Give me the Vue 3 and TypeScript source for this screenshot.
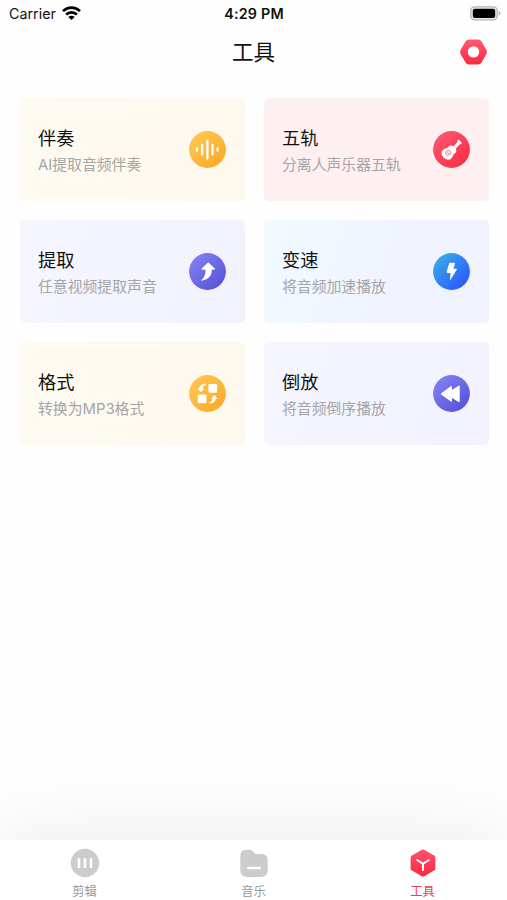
<script setup lang="ts">
type IconName = 'wave' | 'guitar' | 'extract' | 'bolt' | 'convert' | 'rewind'

interface Tool {
  title: string
  desc: string
  icon: IconName
  tone: string
  from: string
  to: string
}

const tools: Tool[] = [
  { title: '伴奏', desc: 'AI提取音频伴奏', icon: 'wave', tone: 'cream', from: '#ffc653', to: '#fbab28' },
  { title: '五轨', desc: '分离人声乐器五轨', icon: 'guitar', tone: 'rose', from: '#ff5670', to: '#fb2e46' },
  { title: '提取', desc: '任意视频提取声音', icon: 'extract', tone: 'lilac', from: '#8280f4', to: '#5755d6' },
  { title: '变速', desc: '将音频加速播放', icon: 'bolt', tone: 'sky', from: '#39ace9', to: '#2b58fc' },
  { title: '格式', desc: '转换为MP3格式', icon: 'convert', tone: 'cream', from: '#ffc653', to: '#fbab28' },
  { title: '倒放', desc: '将音频倒序播放', icon: 'rewind', tone: 'lilac', from: '#8280f4', to: '#5755d6' },
]
</script>

<template>
  <div class="screen">
    <header class="status">
      <div class="carrier">
        <span>Carrier</span>
        <svg class="wifi" width="19" height="14" viewBox="0 0 19 14" fill="none" stroke="#000" stroke-width="2.700">
          <path d="M1 5.1C5.8.5 13.2.5 18 5.1" />
          <path d="M4.1 8.500C7.200 5.600 11.800 5.600 14.900 8.500" />
          <path d="M9.500 14 6.300 10.900C8.200 9.300 10.800 9.300 12.700 10.900Z" fill="#000" stroke="none" />
        </svg>
      </div>
      <div class="time">4:29 PM</div>
      <div class="power">
        <svg width="31" height="15" viewBox="0 0 31 15">
          <rect x=".8" y=".8" width="26.400" height="13" rx="3.800" fill="#eee" stroke="#b4b4b4" stroke-width="1.300" />
          <rect x="2.800" y="2.700" width="22.400" height="9.200" rx="2" fill="#000" />
          <path d="M28.800 5v4.600c2-.7 2-3.900 0-4.600Z" fill="#aaa" />
        </svg>
      </div>
    </header>

    <nav class="navbar">
      <h1>工具</h1>
      <svg class="settings" width="27" height="26" viewBox="0 0 27 26">
        <defs>
          <linearGradient id="nut" x1="0" y1="0" x2="0" y2="1">
            <stop offset="0" stop-color="#ff5873" />
            <stop offset="1" stop-color="#fb2a40" />
          </linearGradient>
        </defs>
        <path d="M9 .5h9q2.200 0 3.500 1.900l4.700 8.200q1.300 2.400 0 4.800l-4.700 8.200q-1.300 1.900-3.500 1.900H9q-2.200 0-3.500-1.900L.8 15.400q-1.300-2.400 0-4.800l4.700-8.200Q6.800.5 9 .5Z" fill="url(#nut)" />
        <circle cx="13.500" cy="12.900" r="5.700" fill="#fff" />
      </svg>
    </nav>

    <main class="grid">
      <article v-for="tool in tools" :key="tool.title" class="card" :class="tool.tone">
        <div class="copy">
          <h2>{{ tool.title }}</h2>
          <p>{{ tool.desc }}</p>
        </div>
        <svg class="badge" width="37" height="37" viewBox="0 0 37 37">
          <defs>
            <linearGradient :id="`fill-${tool.icon}`" x1=".1" y1=".1" x2=".85" y2=".9">
              <stop offset="0" :stop-color="tool.from" />
              <stop offset="1" :stop-color="tool.to" />
            </linearGradient>
          </defs>
          <circle cx="18.500" cy="18.500" r="18.400" :fill="`url(#fill-${tool.icon})`" />
          <g v-if="tool.icon === 'wave'" stroke="#fff" stroke-width="2.300" stroke-linecap="round">
            <path d="M8 17.500v2.200M13.100 13.900v9.600M18.400 9.900v17.600M23.500 13.900v9.600M28.600 17.500v2.200" />
          </g>
          <g v-else-if="tool.icon === 'guitar'">
            <path d="M26.300 9.100 28.500 11.500Q29.100 12.300 28.300 12.900L26.500 13.600 22.700 17.700C24.100 20 23 21.500 21.600 22.600 20.300 23.600 20.200 24.400 19.200 26.200 17.200 29.800 13.200 29.300 10.300 26.200 7.600 23.100 7.900 19.900 11.300 18 13.100 17 14.200 17.200 15.300 15.900 16.700 14.300 18.600 13.800 20.400 15.400L24.200 11.600 24.500 9.600Q25.300 8.400 26.300 9.100Z" fill="#fff" />
            <ellipse cx="15.200" cy="21.800" rx="2.600" ry="2.200" transform="rotate(-40 15.200 21.800)" fill="none" stroke="#fb6678" stroke-width=".9" />
            <path d="m14.100 21.200 2 2" stroke="#fb6678" stroke-width=".8" />
          </g>
          <path v-else-if="tool.icon === 'extract'" d="M18.500 10Q19.300 9.200 20.100 10L26 15.700Q26.500 16.400 25.700 16.500L22.700 16.700C23 22 20.200 26.300 12.600 27.700Q12 27.700 12.500 27.100C15.800 24.300 16.700 20.500 16.500 16.800L12.900 16.600Q12.100 16.300 12.700 15.600Z" fill="#fff" />
          <path v-else-if="tool.icon === 'bolt'" d="M17.200 9.700H21.200Q22.300 9.700 21.900 10.700L20.400 15.700H23.200Q24.200 15.800 23.700 16.700L17.700 26.600Q16.900 27.600 17 26.400L17.500 19.900H14.300Q13.400 19.700 13.600 18.800L16 10.600Q16.300 9.700 17.200 9.700Z" fill="#fff" />
          <g v-else-if="tool.icon === 'convert'" fill="#fff">
            <rect x="19.400" y="9" width="8.800" height="8.700" rx="1.300" />
            <rect x="8.700" y="19.500" width="8.800" height="8.700" rx="1.300" />
            <g stroke="#fff" stroke-width=".7" stroke-linejoin="round">
              <path d="M17 9.200C12.600 9.300 10.800 10.600 10.700 13.600L9.300 13.600 11.800 16.900 14.700 13.600 13.100 13.600C13.200 11.700 14.400 10.200 17 9.200Z" />
              <path d="M20 28C24.500 27.800 26.400 26.500 26.500 23.500L27.900 23.500 25.400 20.200 22.500 23.500 24.100 23.500C24 25.400 22.700 27 20 28Z" />
            </g>
          </g>
          <path v-else d="M17.800 11.200Q18.900 10.500 18.900 11.700V15L25.600 10.700Q26.700 10.100 26.700 11.300V26.300Q26.700 27.500 25.600 26.900L18.900 22.700V25.900Q18.900 27.100 17.800 26.400L8.500 19.700Q7.400 18.800 8.500 17.900Z" fill="#fff" />
        </svg>
      </article>
    </main>

    <footer class="tabs">
      <div class="tab">
        <svg width="30" height="30" viewBox="0 0 30 30">
          <circle cx="15" cy="15" r="14.200" fill="#ccc" />
          <path d="M9 10.300v9.800M15 10.300v9.800M21 10.300v9.800" stroke="#fff" stroke-width="2.600" />
        </svg>
        <span>剪辑</span>
      </div>
      <div class="tab">
        <svg width="30" height="30" viewBox="0 0 30 30">
          <path d="M7.500 1.700H10.500C15 1.700 14.300 6 18 6H22C26.500 6 28.700 8.300 28.700 12V22Q28.700 29 21.700 29H8.300Q1.300 29 1.300 22V8Q1.300 1.700 7.500 1.700Z" fill="#ccc" />
          <path d="M9.300 20h11.400" stroke="#fff" stroke-width="2.600" stroke-linecap="round" />
        </svg>
        <span>音乐</span>
      </div>
      <div class="tab active">
        <svg width="30" height="30" viewBox="0 0 30 30">
          <defs>
            <linearGradient id="cube" x1="0" y1="0" x2="0" y2="1">
              <stop offset="0" stop-color="#ff526c" />
              <stop offset="1" stop-color="#fb2a40" />
            </linearGradient>
          </defs>
          <path d="M13.800 1.800Q15 1.100 16.200 1.800L26.100 7.400Q27.400 8.100 27.400 9.500V20.500Q27.400 21.900 26.100 22.600L16.200 28.200Q15 28.900 13.800 28.200L3.900 22.600Q2.600 21.900 2.600 20.500V9.500Q2.600 8.100 3.900 7.400Z" fill="url(#cube)" />
          <path d="m9.200 12 5.800 3.800 5.800-3.800M15 15.800V22" fill="none" stroke="#fff" stroke-width="2" stroke-linecap="round" />
        </svg>
        <span>工具</span>
      </div>
    </footer>
  </div>
</template>

<style>
body {
  margin: 0;
  background: #fff;
}
</style>

<style scoped>
.screen {
  display: flex;
  flex-direction: column;
  width: 507px;
  height: 900px;
  overflow: hidden;
  background: #fefefe;
  color: #111;
  font-family: Inter, "Noto Sans CJK SC", sans-serif;
}

.status {
  display: grid;
  grid-template-columns: 1fr auto 1fr;
  align-items: center;
  height: 27px;
  padding: 0 6px 0 9px;
  font-size: 14.3px;
}

.carrier {
  display: flex;
  align-items: center;
  gap: 6px;
}

.wifi {
  display: block;
  margin-top: -2px;
}

.time {
  margin-right: 2px;
  font-weight: 600;
  font-size: 14.3px;
  letter-spacing: 0.2px;
}

.power {
  display: flex;
  justify-content: flex-end;
}

.navbar {
  display: grid;
  grid-template-columns: 1fr auto 1fr;
  align-items: center;
  height: 50px;
  padding: 0 20px;
}

h1 {
  grid-column: 2;
  margin: 0;
  font-size: 21.5px;
  font-weight: 400;
  line-height: 30px;
}

.settings {
  justify-self: end;
}

.grid {
  display: grid;
  grid-template-columns: 1fr 1fr;
  grid-auto-rows: 103px;
  gap: 19px 19.5px;
  padding: 21px 18.500px 0 20px;
}

.card {
  display: flex;
  justify-content: space-between;
  align-items: center;
  padding: 0 18.500px 0 18px;
  border-radius: 5px;
}

.cream {
  background: linear-gradient(110deg, #fffaf2, #fef9ed);
}

.rose {
  background: linear-gradient(110deg, #fef0f1, #feeff0);
}

.lilac {
  background: linear-gradient(110deg, #f5f6ff, #f2f2fe);
}

.sky {
  background: linear-gradient(110deg, #f2fbff, #f0f3ff 60%);
}

.copy {
  display: flex;
  flex-direction: column;
  gap: 3px;
  padding-top: 2px;
}

h2 {
  margin: 0;
  font-size: 18.2px;
  font-weight: 400;
  line-height: 26px;
}

p {
  margin: 0;
  color: #a5a5a5;
  font-size: 14.85px;
  line-height: 22px;
}

.tabs {
  display: grid;
  grid-template-columns: repeat(3, 1fr);
  height: 60px;
  margin-top: auto;
  background: #fff;
  box-shadow: 0 0 76px rgba(0, 0, 0, 0.09);
}

.tab {
  display: flex;
  flex-direction: column;
  align-items: center;
  gap: 5px;
  padding-top: 8px;
  color: #999;
  font-size: 12.3px;
  line-height: 18px;
}

.tab svg {
  flex: none;
}

.active {
  color: #f23b50;
}
</style>
